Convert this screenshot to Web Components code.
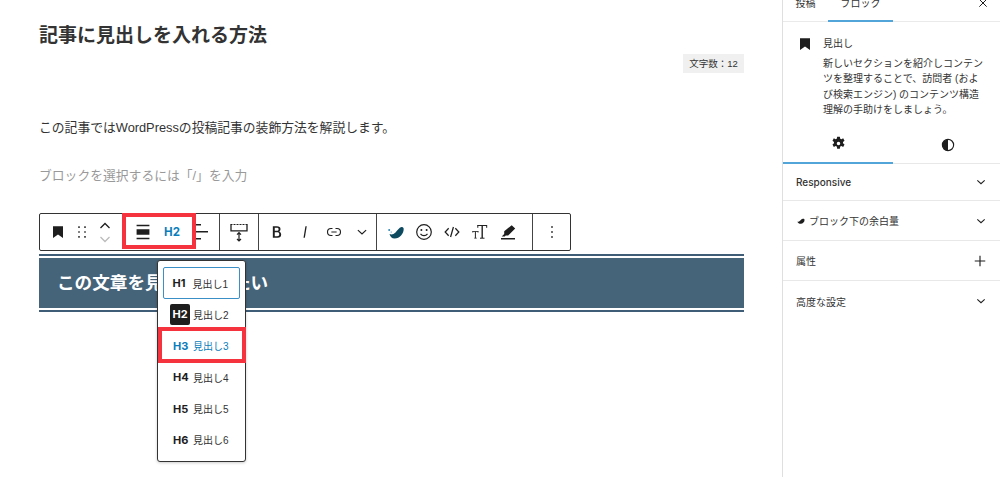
<!DOCTYPE html>
<html lang="ja"><head><meta charset="utf-8"><title>記事に見出しを入れる方法</title>
<style>
html,body{margin:0;padding:0;height:477px;overflow:hidden;background:#fff}
body{font-family:"Liberation Sans","Noto Sans CJK JP",sans-serif;color:#333}
</style></head><body>
<edit-shell>
  <editor-canvas slot="main"></editor-canvas>
  <settings-sidebar slot="side"></settings-sidebar>
</edit-shell>
<script>
const I={
bookmark:'<path d="M7 6.300h10v11.700l-5-3.600-5 3.600z" fill="#1e1e1e"/>',
drag:'<path d="M8.200 6.300h1.600v1.600H8.200zM8.200 11.200h1.600v1.600H8.200zM8.200 16.100h1.600v1.600H8.200zM14.200 6.300h1.600v1.600h-1.600zM14.200 11.200h1.600v1.600h-1.600zM14.200 16.100h1.600v1.600h-1.600z" fill="#333"/>',
alignNone:'<path d="M5 15h14V9H5v6zm0 4.800h14v-1.500H5v1.500zM5 4.200v1.500h14V4.200H5z" fill="#1e1e1e"/>',
alignLeft:'<path d="M13 5.500H4V4h9v1.500Zm7 7H4V11h16v1.500Zm-7 7H4V18h9v1.500Z" fill="#1e1e1e"/>',
roller:'<path d="M3.500 4.500h17" fill="none" stroke="#1e1e1e" stroke-width="1.200" stroke-dasharray="2 1"/><path d="M4 4.500v6.300h16V4.500" fill="none" stroke="#1e1e1e" stroke-width="1.300"/><path d="M12 13v7.500M10 14.600l2-2 2 2M10 19l2 2 2-2" fill="none" stroke="#1e1e1e" stroke-width="1.200"/>',
bold:'<path d="M14.700 11.300c1-.6 1.500-1.600 1.500-3 0-2.300-1.600-3.300-4.300-3.300H7v14h5.800c2.600 0 4.200-1.400 4.200-3.900 0-1.900-.9-3.200-2.300-3.800zM9.300 7h2.400c1.400 0 2.200.5 2.200 1.600 0 1.300-.8 1.800-2.200 1.800H9.300V7zm2.900 10H9.300v-4.600h2.900c1.600 0 2.500.7 2.500 2.300 0 1.700-.9 2.300-2.500 2.300z" fill="#1e1e1e"/>',
italic:'<path d="M12.500 5 10.200 19h1.600L14.100 5z" fill="#1e1e1e"/>',
link:'<path d="M10 17.400H8A5.400 5.400 0 0 1 8 6.600h2v1.500H8a3.900 3.900 0 0 0 0 7.800h2v1.500zM14 6.600h2a5.400 5.400 0 0 1 0 10.800h-2v-1.500h2a3.900 3.900 0 0 0 0-7.800h-2V6.600zM8.500 11.200h7v1.600h-7z" fill="#1e1e1e"/>',
down:'<path d="M6.500 9.500 12 14.500l5.500-5" fill="none" stroke="#1e1e1e" stroke-width="1.600"/>',
swell:'<path d="M6.500 14c2 .8 4 .5 6-1.500 2-2 3.500-5 6-5.500 1.500-.3 2.200.8 2.200 2 0 4.500-4 9.500-9 9.500-3 0-4.500-2-5.200-4.500z" fill="#0d4a60"/><circle cx="6.200" cy="10" r="1" fill="#2b87b3"/><circle cx="8.200" cy="12" r=".6" fill="#2b87b3"/>',
smile:'<circle cx="12" cy="12" r="7.300" fill="none" stroke="#1e1e1e" stroke-width="1.200"/><circle cx="9.400" cy="10" r="1" fill="#1e1e1e"/><circle cx="14.600" cy="10" r="1" fill="#1e1e1e"/><path d="M8.500 13.800c1.800 2.500 5.200 2.500 7 0" fill="none" stroke="#1e1e1e" stroke-width="1.200"/>',
code:'<path d="M8 7.500 3.800 12 8 16.500M16 7.500l4.200 4.500-4.200 4.500M13.700 6l-3.400 12" fill="none" stroke="#1e1e1e" stroke-width="1.500"/>',
tT:'<g fill="none" stroke="#222"><path d="M9.500 5.500h9.500M9.800 5v2.800M18.700 5v2.800" stroke-width="1"/><path d="M14.200 5.500V18" stroke-width="1.400"/><path d="M12 18.200h4.500" stroke-width="1"/><path d="M4.500 11.500h5.800M4.800 11v1.600M10 11v1.600M6.300 18.200h2.400" stroke-width=".8"/><path d="M7.400 11.500V18" stroke-width="1"/></g>',
hl:'<path d="M5 18h14v1.500H5z" fill="#1e1e1e"/><path d="M15.700 5.200 19.200 8.400l-7 7H9.700l-1 1H5.700l2.500-2.500v-2.700z" fill="#1e1e1e"/>',
more:'<path d="M11 5h2v2h-2zM11 11h2v2h-2zM11 17h2v2h-2z" fill="#1e1e1e"/>',
gear:'<path d="M10.300 3.500h3.400l.5 2.500 1.500.7 2.200-1.300 1.700 3-1.900 1.600v1.800l1.900 1.600-1.700 3-2.200-1.300-1.500.7-.5 2.700h-3.400l-.5-2.700-1.500-.7-2.200 1.300-1.700-3 1.900-1.600v-1.800L4.400 8.400l1.700-3 2.200 1.300 1.500-.7zM12 9.800a2.200 2.200 0 1 0 0 4.400 2.200 2.200 0 0 0 0-4.400z" fill="#1e1e1e" fill-rule="evenodd"/>',
half:'<circle cx="12" cy="12" r="7.500" fill="none" stroke="#1e1e1e" stroke-width="1.500"/><path d="M12 4.500a7.500 7.500 0 0 0 0 15z" fill="#1e1e1e"/>',
close:'<path d="M6.500 6.500l11 11M17.500 6.500l-11 11" fill="none" stroke="#1e1e1e" stroke-width="1.500"/>',
plus:'<path d="M12 5v14M5 12h14" fill="none" stroke="#1e1e1e" stroke-width="1.500"/>',
swellMini:'<path d="M3 13c2 1 4.500.5 6.500-1.500 2-2 4-4.500 7-5 2.500-.4 4 1 4 3 0 4.500-4 9-9 9-4 0-7-2-8.500-5.500z" fill="#1e1e1e"/>'
};
const svg=(n,s=24)=>`<svg width="${s}" height="${s}" viewBox="0 0 24 24" aria-hidden="true" style="display:block;flex:none">${I[n]}</svg>`;
function def(name,render){customElements.define(name,class extends HTMLElement{connectedCallback(){if(this.shadowRoot)return;this.attachShadow({mode:'open'}).innerHTML=render(this)}})}
const FONT='"Liberation Sans","Noto Sans CJK JP",sans-serif';

def('edit-shell',()=>`<style>:host{display:grid;grid-template-columns:782px 218px;height:477px;overflow:hidden;font-family:${FONT}}</style><slot name="main"></slot><slot name="side"></slot>`);

def('tb-btn',h=>`<style>:host{display:flex;align-items:center;justify-content:center;width:${h.getAttribute('w')}px;height:36px;flex:none}</style>${h.hasAttribute('i')?svg(h.getAttribute('i'),+(h.getAttribute('s')||24)):'<slot></slot>'}`);

def('block-toolbar',()=>`<style>
:host{display:flex;width:532px;height:38px;box-sizing:border-box;border:1px solid #333;border-radius:2px;background:#fff}
.g{display:flex;border-right:1px solid #444;flex:none}
.g:last-child{border-right:0}
.mv{display:flex;flex-direction:column;align-items:center;width:34px;flex:none;justify-content:center;gap:1px}
.h2{font:700 11.500px "Inter",sans-serif;color:#0b7dbb}
</style>
<div class="g" style="width:179px">
  <tb-btn w="36" i="bookmark"></tb-btn><tb-btn w="12" i="drag"></tb-btn>
  <div class="mv"><svg width="16" height="12" viewBox="0 0 16 12"><path d="M3.500 8 8 3.500 12.500 8" fill="none" stroke="#1e1e1e" stroke-width="1.300"/></svg><svg width="16" height="12" viewBox="0 0 16 12"><path d="M3.500 4 8 8.500 12.500 4" fill="none" stroke="#bbb" stroke-width="1.300"/></svg></div>
  <tb-btn w="42" i="alignNone" s="22"></tb-btn><tb-btn w="16"><span class="h2">H2</span></tb-btn><tb-btn w="39" i="alignLeft"></tb-btn>
</div>
<div class="g" style="width:38px"><tb-btn w="38" i="roller"></tb-btn></div>
<div class="g" style="width:117px"><tb-btn w="36" i="bold" s="20"></tb-btn><tb-btn w="20" i="italic" s="20"></tb-btn><tb-btn w="38" i="link" s="18"></tb-btn><tb-btn w="18" i="down" s="18"></tb-btn></div>
<div class="g" style="width:155px"><tb-btn w="36" i="swell"></tb-btn><tb-btn w="22" i="smile"></tb-btn><tb-btn w="34" i="code" s="20"></tb-btn><tb-btn w="22" i="tT"></tb-btn><tb-btn w="34" i="hl"></tb-btn></div>
<div class="g" style="width:37px"><tb-btn w="37" i="more" s="20"></tb-btn></div>`);

def('heading-band',h=>`<style>
:host{display:block;height:58px;box-sizing:border-box;border-top:2px solid #3f5d76;border-bottom:2px solid #3f5d76;padding:2px 0;position:relative}
.b{height:50px;background:#456379;color:#fff;font:700 17.600px/50px ${FONT};padding-left:18px;box-sizing:border-box}
</style><div class="b"><slot></slot></div>`);

def('menu-item',h=>{const n=h.getAttribute('n');return `<style>
:host{display:flex;align-items:center;height:31.300px;padding-left:10px;font:10px ${FONT};color:#333;box-sizing:border-box;white-space:nowrap}
:host([state=first]){height:32px;border:1.500px solid #3a8fc7;border-radius:2px;padding-left:8.500px}
:host([state=active]){color:#0b7dbb}
b{font:700 11px "Inter",sans-serif;color:#1e1e1e;margin-right:5px;width:15px}
:host([state=active]) b{color:#0b7dbb}
:host([state=dark]) b{background:#1e1e1e;color:#fff;width:20px;height:21px;line-height:21px;text-align:center;border-radius:2px;margin:0 3px 0 -3px;flex:none}
</style><b>H${n}</b><span>見出し${n}</span>`});

def('heading-menu',()=>`<style>
:host{position:absolute;left:118px;top:47px;width:89px;height:202px;box-sizing:border-box;background:#fff;border:1px solid #333;border-radius:3px;padding:6px 5px;display:block;box-shadow:0 1px 3px rgba(0,0,0,.2)}
</style><menu-item n="1" state="first"></menu-item><menu-item n="2" state="dark"></menu-item><menu-item n="3" state="active"></menu-item><menu-item n="4"></menu-item><menu-item n="5"></menu-item><menu-item n="6"></menu-item>`);

def('red-mark',h=>`<style>:host{position:absolute;box-sizing:border-box;border:4px solid #f5333f;left:${h.getAttribute('x')}px;top:${h.getAttribute('y')}px;width:${h.getAttribute('w')}px;height:${h.getAttribute('h')}px;display:block;pointer-events:none}</style>`);

def('editor-canvas',()=>`<style>
:host{display:block;padding:23px 38px 0 39px;box-sizing:border-box;height:477px;font-family:${FONT}}
h1{margin:0;font:700 19px/26px ${FONT};color:#333}
.c{margin-top:5px;display:flex;justify-content:flex-end}
.c span{background:#f0f0f0;font-size:9.500px;line-height:19px;height:19px;color:#333;width:61px;box-sizing:border-box;text-align:center}
p{margin:45px 0 0;font-size:12.800px;line-height:20px;color:#333}
p.ph{margin-top:28px;color:#999}
.w{position:relative;margin-top:27px}
heading-band{margin-top:3px}
</style>
<h1>記事に見出しを入れる方法</h1>
<div class="c"><span>文字数：12</span></div>
<p>この記事ではWordPressの投稿記事の装飾方法を解説します。</p>
<p class="ph">ブロックを選択するには「/」を入力</p>
<div class="w">
  <block-toolbar></block-toolbar>
  <heading-band>この文章を見出しにしたい</heading-band>
  <heading-menu></heading-menu>
  <red-mark x="83" y="0" w="74" h="36"></red-mark>
  <red-mark x="119" y="114" w="88" h="36"></red-mark>
</div>`);

def('panel-row',h=>`<style>
:host{display:flex;align-items:center;justify-content:space-between;height:40px;box-sizing:border-box;border-bottom:1.500px solid #e8e8e8;padding:0 11px 0 13px;font:10px ${FONT};color:#333}
:host([strong]){font:500 10px "Inter",${FONT};height:37px}
.l{display:flex;align-items:center;gap:3px}
</style><span class="l">${h.hasAttribute('swell')?svg('swellMini',10):''}<slot></slot></span>${svg(h.getAttribute('icon')||'down',h.getAttribute('icon')?18:16)}`);

def('settings-sidebar',()=>`<style>
:host{display:block;border-left:1px solid #dfdfdf;height:477px;box-sizing:border-box;font:10px ${FONT};color:#1e1e1e;overflow:hidden}
.tabs{display:flex;height:22px;align-items:flex-end;border-bottom:1px solid #eaeaea;box-sizing:border-box}
.t{height:36px;line-height:14px;flex:none;margin-bottom:-1px;box-sizing:border-box;padding-top:11px;text-align:center;align-self:flex-end;color:#333}
.t.a{border-bottom:2px solid #52a5d8}
.x{margin-left:auto;align-self:flex-end;margin-bottom:10px;margin-right:9px}
.card{display:grid;grid-template-columns:16px 1fr;column-gap:12px;padding:13px 13px 0 12px;height:92px;box-sizing:border-box}
.ic{width:16px;height:16px;margin:-3px 0 0 -2px}
.card b{font-weight:400;line-height:18px;display:block;margin-bottom:3px;color:#333}
.card div.d{line-height:15.300px;color:#333}
.sub{display:flex;height:50px;border-bottom:1px solid #e8e8e8;box-sizing:border-box}
.sub div{width:110px;flex:none;display:flex;align-items:center;justify-content:center;box-sizing:border-box;height:50px;padding-top:11px}
.sub div.a{border-bottom:2px solid #52a5d8}
</style>
<div class="tabs"><div class="t" style="width:45px">投稿</div><div class="t a" style="width:65px">ブロック</div><div class="x">${svg('close',16)}</div></div>
<div class="card"><div class="ic">${svg('bookmark')}</div><div><b>見出し</b><div class="d">新しいセクションを紹介しコンテンツを整理することで、訪問者 (および検索エンジン) のコンテンツ構造理解の手助けをしましょう。</div></div></div>
<div class="sub"><div class="a">${svg('gear',19)}</div><div>${svg('half',18)}</div></div>
<panel-row strong>Responsive</panel-row>
<panel-row swell>ブロック下の余白量</panel-row>
<panel-row icon="plus">属性</panel-row>
<panel-row style="border-bottom:0">高度な設定</panel-row>`);
</script>
</body></html>
